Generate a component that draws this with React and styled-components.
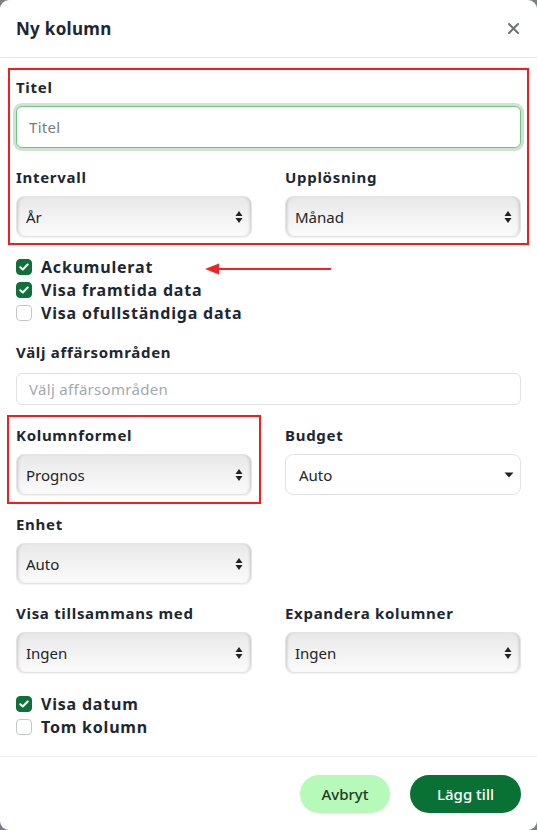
import React from "react";
import styled, { createGlobalStyle } from "styled-components";

const GlobalStyle = createGlobalStyle`
  html, body {
    margin: 0;
    padding: 0;
    background: #7b7f84;
  }
  * {
    box-sizing: border-box;
  }
  body {
    font-family: "Noto Sans", "Open Sans", sans-serif;
    color: #1c2733;
  }
`;

const Modal = styled.div`
  position: relative;
  width: 537px;
  height: 830px;
  background: #fff;
  border-radius: 9px;
  overflow: hidden;
  display: flex;
  flex-direction: column;
`;

const Header = styled.div`
  height: 58px;
  display: flex;
  align-items: center;
  justify-content: space-between;
  padding: 0 16px;
  border-bottom: 1px solid #e3e5e8;
`;

const Title = styled.h1`
  margin: 0;
  font-size: 17px;
  font-weight: 700;
  letter-spacing: 0.3px;
  color: #1c2733;
`;

const CloseButton = styled.button`
  border: none;
  background: none;
  padding: 0;
  width: 16px;
  height: 16px;
  display: flex;
  align-items: center;
  justify-content: center;
  color: #6c7178;
  cursor: pointer;
`;

const Body = styled.div`
  flex: 1;
  padding: 18px 16px 0;
  display: flex;
  flex-direction: column;
`;

const Group = styled.div`
  display: flex;
  flex-direction: column;
  gap: 18px;
  outline: ${(p) => (p.$highlight ? "2px solid #f21d1d" : "none")};
  outline-offset: ${(p) => p.$offset || 6}px;
  margin-bottom: ${(p) => p.$mb || 0}px;
`;

const Row = styled.div`
  display: grid;
  grid-template-columns: 1fr 1fr;
  column-gap: 33px;
  margin-bottom: ${(p) => p.$mb || 0}px;
`;

const Field = styled.div`
  display: flex;
  flex-direction: column;
  margin-bottom: ${(p) => p.$mb || 0}px;
  outline: ${(p) => (p.$highlight ? "2px solid #f21d1d" : "none")};
  outline-offset: 7px;
`;

const Label = styled.label`
  font-size: 15px;
  font-weight: 700;
  letter-spacing: 0.7px;
  line-height: 22px;
  color: #1c2733;
  margin-bottom: ${(p) => p.$mb || 8}px;
`;

const TextInput = styled.input`
  height: ${(p) => p.$h || 42}px;
  width: 100%;
  border-radius: 6px;
  font-family: inherit;
  font-size: 15px;
  padding: 0 12px;
  color: #212529;
  outline: none;
  border: 1px solid ${(p) => (p.$focus ? "#72c283" : "#dfe2e6")};
  box-shadow: ${(p) => (p.$focus ? "0 0 0 3px #cfe3d2" : "none")};
  &::placeholder {
    color: ${(p) => (p.$focus ? "#737b84" : "#a3a8ae")};
    letter-spacing: 0.3px;
  }
`;

const SelectWrap = styled.div`
  position: relative;
  height: 41px;
`;

const NativeSelect = styled.select`
  appearance: none;
  width: 100%;
  height: 100%;
  font-family: inherit;
  font-size: 15px;
  color: #212529;
  padding: 0 28px 0 9px;
  border-radius: 8px;
  outline: none;
  border: 1px solid ${(p) => (p.$plain ? "#dfe2e6" : "#e4e4e4")};
  background: ${(p) =>
    p.$plain ? "#fff" : "linear-gradient(180deg, #e8e8e8 0%, #f1f1f1 45%, #fbfbfb 100%)"};
  box-shadow: ${(p) =>
    p.$plain
      ? "none"
      : "inset 3px 0 3px -2px rgba(0,0,0,0.18), inset -3px 0 3px -2px rgba(0,0,0,0.18), 0 1px 1px rgba(0,0,0,0.06)"};
  padding-left: ${(p) => (p.$plain ? 13 : 9)}px;
`;

const Arrow = styled.span`
  position: absolute;
  right: ${(p) => (p.$plain ? 7 : 9)}px;
  top: 50%;
  transform: translateY(-50%);
  display: flex;
  pointer-events: none;
`;

const Checks = styled.div`
  display: flex;
  flex-direction: column;
  margin-bottom: ${(p) => p.$mb || 0}px;
`;

const CheckRow = styled.label`
  display: flex;
  align-items: center;
  gap: 9px;
  height: 23px;
  font-size: 16px;
  font-weight: 700;
  letter-spacing: 0.8px;
  color: #1c2733;
`;

const Box = styled.span`
  width: 16px;
  height: 16px;
  border-radius: 4px;
  display: flex;
  align-items: center;
  justify-content: center;
  background: ${(p) => (p.$checked ? "#11703a" : "#fff")};
  border: 1px solid ${(p) => (p.$checked ? "#11703a" : "#c3c7cc")};
`;

const Footer = styled.div`
  border-top: 1px solid #eceef0;
  height: 74px;
  display: flex;
  align-items: center;
  justify-content: flex-end;
  gap: 20px;
  padding: 0 16px;
`;

const Button = styled.button`
  height: 38px;
  width: ${(p) => p.$w}px;
  padding: 0;
  border-radius: 19px;
  border: none;
  font-family: inherit;
  font-size: 15px;
  font-weight: 500;
  background: ${(p) => (p.$primary ? "#0a7135" : "#b6f9b8")};
  color: ${(p) => (p.$primary ? "#fff" : "#1f3a27")};
  cursor: pointer;
`;

const Annotation = styled.svg`
  position: absolute;
  left: 203px;
  top: 262px;
`;

function UpDown() {
  return (
    <svg width="8" height="14" viewBox="0 0 8 14">
      <path d="M4 1 L7.5 6 H0.5 Z" fill="#222" />
      <path d="M4 13 L7.5 8 H0.5 Z" fill="#222" />
    </svg>
  );
}

function Caret() {
  return (
    <svg width="10" height="6" viewBox="0 0 10 6">
      <path d="M0.5 0.5 H9.5 L5 5.5 Z" fill="#222" />
    </svg>
  );
}

function Select({ value, plain }) {
  return (
    <SelectWrap>
      <NativeSelect $plain={plain} defaultValue={value}>
        <option>{value}</option>
      </NativeSelect>
      <Arrow $plain={plain}>{plain ? <Caret /> : <UpDown />}</Arrow>
    </SelectWrap>
  );
}

function Check({ checked, children }) {
  return (
    <CheckRow>
      <Box $checked={checked}>
        {checked && (
          <svg width="10" height="8" viewBox="0 0 10 8">
            <path
              d="M1.3 4.2 L3.8 6.5 L8.7 1.5"
              fill="none"
              stroke="#fff"
              strokeWidth="2"
              strokeLinecap="round"
              strokeLinejoin="round"
            />
          </svg>
        )}
      </Box>
      {children}
    </CheckRow>
  );
}

export default function App() {
  return (
    <>
      <GlobalStyle />
      <Modal>
        <Header>
          <Title>Ny kolumn</Title>
          <CloseButton aria-label="Stäng">
            <svg width="11" height="11" viewBox="0 0 11 11">
              <path
                d="M1 1 L10 10 M10 1 L1 10"
                stroke="currentColor"
                strokeWidth="2"
                strokeLinecap="round"
              />
            </svg>
          </CloseButton>
        </Header>
        <Body>
          <Group $highlight $mb={18}>
            <Field>
              <Label>Titel</Label>
              <TextInput $focus placeholder="Titel" />
            </Field>
            <Row>
              <Field>
                <Label>Intervall</Label>
                <Select value="År" />
              </Field>
              <Field>
                <Label>Upplösning</Label>
                <Select value="Månad" />
              </Field>
            </Row>
          </Group>

          <Checks $mb={17}>
            <Check checked>Ackumulerat</Check>
            <Check checked>Visa framtida data</Check>
            <Check>Visa ofullständiga data</Check>
          </Checks>

          <Field $mb={19}>
            <Label $mb={10}>Välj affärsområden</Label>
            <TextInput $h={32} placeholder="Välj affärsområden" />
          </Field>

          <Row $mb={18}>
            <Field $highlight>
              <Label>Kolumnformel</Label>
              <Select value="Prognos" />
            </Field>
            <Field>
              <Label>Budget</Label>
              <Select value="Auto" plain />
            </Field>
          </Row>

          <Row $mb={18}>
            <Field>
              <Label>Enhet</Label>
              <Select value="Auto" />
            </Field>
          </Row>

          <Row $mb={19}>
            <Field>
              <Label>Visa tillsammans med</Label>
              <Select value="Ingen" />
            </Field>
            <Field>
              <Label>Expandera kolumner</Label>
              <Select value="Ingen" />
            </Field>
          </Row>

          <Checks>
            <Check checked>Visa datum</Check>
            <Check>Tom kolumn</Check>
          </Checks>
        </Body>
        <Footer>
          <Button $w={90}>Avbryt</Button>
          <Button $w={111} $primary>Lägg till</Button>
        </Footer>
        <Annotation width="130" height="14" viewBox="0 0 130 14">
          <path d="M128 7 H14" stroke="#f02323" strokeWidth="2" />
          <path d="M2 7 L16 1.5 L16 12.5 Z" fill="#f02323" />
        </Annotation>
      </Modal>
    </>
  );
}
